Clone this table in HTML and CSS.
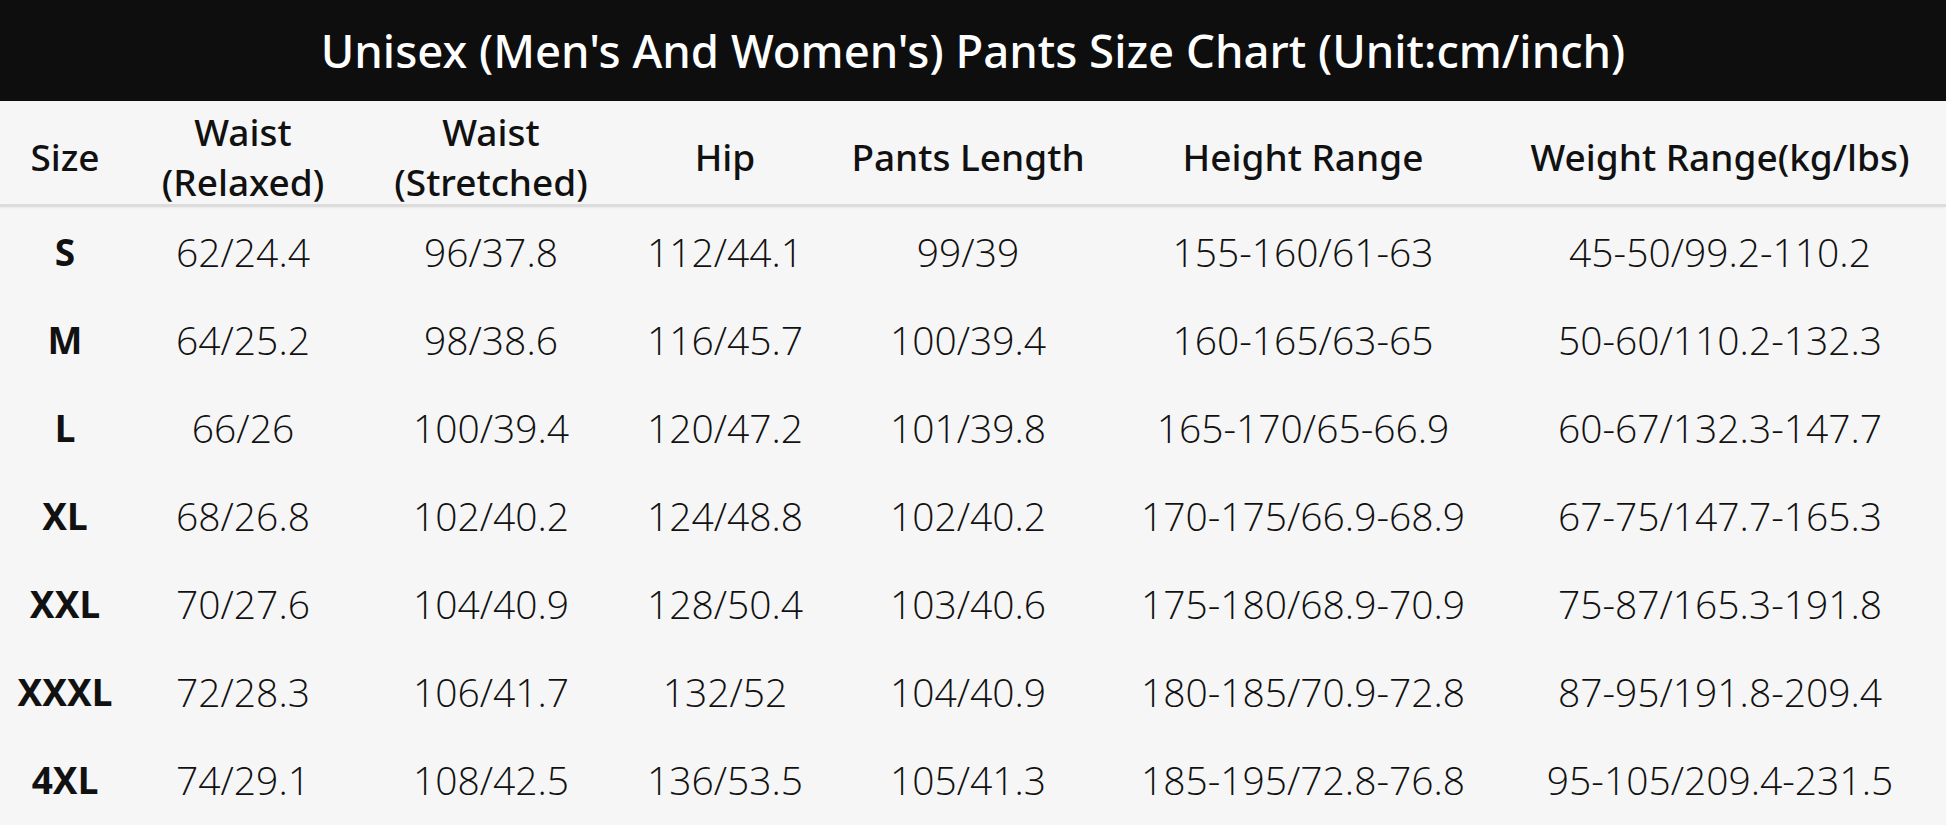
FILE: index.html
```html
<!DOCTYPE html>
<html lang="en">
<head>
<meta charset="utf-8">
<title>Unisex Pants Size Chart</title>
<link rel="stylesheet" href="styles.css">
</head>
<body>
<div class="chart">
  <h1 class="title">Unisex (Men's And Women's) Pants Size Chart (Unit:cm/inch)</h1>
  <div class="table">
    <div class="row head">
      <div class="cell">Size</div>
      <div class="cell">Waist<br>(Relaxed)</div>
      <div class="cell">Waist<br>(Stretched)</div>
      <div class="cell">Hip</div>
      <div class="cell">Pants Length</div>
      <div class="cell">Height Range</div>
      <div class="cell">Weight Range(kg/lbs)</div>
    </div>
    <div class="row">
      <div class="cell size">S</div>
      <div class="cell">62/24.4</div>
      <div class="cell">96/37.8</div>
      <div class="cell">112/44.1</div>
      <div class="cell">99/39</div>
      <div class="cell">155-160/61-63</div>
      <div class="cell">45-50/99.2-110.2</div>
    </div>
    <div class="row">
      <div class="cell size">M</div>
      <div class="cell">64/25.2</div>
      <div class="cell">98/38.6</div>
      <div class="cell">116/45.7</div>
      <div class="cell">100/39.4</div>
      <div class="cell">160-165/63-65</div>
      <div class="cell">50-60/110.2-132.3</div>
    </div>
    <div class="row">
      <div class="cell size">L</div>
      <div class="cell">66/26</div>
      <div class="cell">100/39.4</div>
      <div class="cell">120/47.2</div>
      <div class="cell">101/39.8</div>
      <div class="cell">165-170/65-66.9</div>
      <div class="cell">60-67/132.3-147.7</div>
    </div>
    <div class="row">
      <div class="cell size">XL</div>
      <div class="cell">68/26.8</div>
      <div class="cell">102/40.2</div>
      <div class="cell">124/48.8</div>
      <div class="cell">102/40.2</div>
      <div class="cell">170-175/66.9-68.9</div>
      <div class="cell">67-75/147.7-165.3</div>
    </div>
    <div class="row">
      <div class="cell size">XXL</div>
      <div class="cell">70/27.6</div>
      <div class="cell">104/40.9</div>
      <div class="cell">128/50.4</div>
      <div class="cell">103/40.6</div>
      <div class="cell">175-180/68.9-70.9</div>
      <div class="cell">75-87/165.3-191.8</div>
    </div>
    <div class="row">
      <div class="cell size">XXXL</div>
      <div class="cell">72/28.3</div>
      <div class="cell">106/41.7</div>
      <div class="cell">132/52</div>
      <div class="cell">104/40.9</div>
      <div class="cell">180-185/70.9-72.8</div>
      <div class="cell">87-95/191.8-209.4</div>
    </div>
    <div class="row">
      <div class="cell size">4XL</div>
      <div class="cell">74/29.1</div>
      <div class="cell">108/42.5</div>
      <div class="cell">136/53.5</div>
      <div class="cell">105/41.3</div>
      <div class="cell">185-195/72.8-76.8</div>
      <div class="cell">95-105/209.4-231.5</div>
    </div>
  </div>
</div>
</body>
</html>
```
FILE: styles.css
```css
html, body {
  margin: 0;
  padding: 0;
  background: #f6f6f6;
}
body {
  width: 1946px;
  height: 825px;
  overflow: hidden;
  font-family: "Open Sans", "Noto Sans", "Liberation Sans", sans-serif;
  color: #111;
}
.chart {
  display: flex;
  flex-direction: column;
}
.title {
  margin: 0;
  height: 101px;
  background: #0e0e0e;
  color: #fff;
  font-family: "Noto Sans", "Open Sans", sans-serif;
  font-weight: 500;
  font-size: 45.5px;
  display: flex;
  align-items: center;
  justify-content: center;
  padding-bottom: 2px;
  box-sizing: border-box;
}
.table {
  display: flex;
  flex-direction: column;
}
.row {
  display: grid;
  grid-template-columns: 130px 226px 270px 198px 288px 382px 452px;
  height: 88px;
  align-items: center;
}
.row.head {
  height: 106px;
  border-bottom: 3px solid #dcdcdc;
  box-sizing: border-box;
  box-shadow: 0 1px 2px rgba(0,0,0,0.06);
}
.cell {
  text-align: center;
  font-size: 39px;
  font-weight: 300;
  line-height: 1;
  white-space: nowrap;
}
.head .cell {
  font-family: "Noto Sans", "Open Sans", sans-serif;
  font-weight: 500;
  font-size: 37px;
  line-height: 50px;
  padding-top: 6px;
}
.cell.size {
  font-family: "Noto Sans", "Open Sans", sans-serif;
  font-weight: 700;
  font-size: 37px;
}
```
